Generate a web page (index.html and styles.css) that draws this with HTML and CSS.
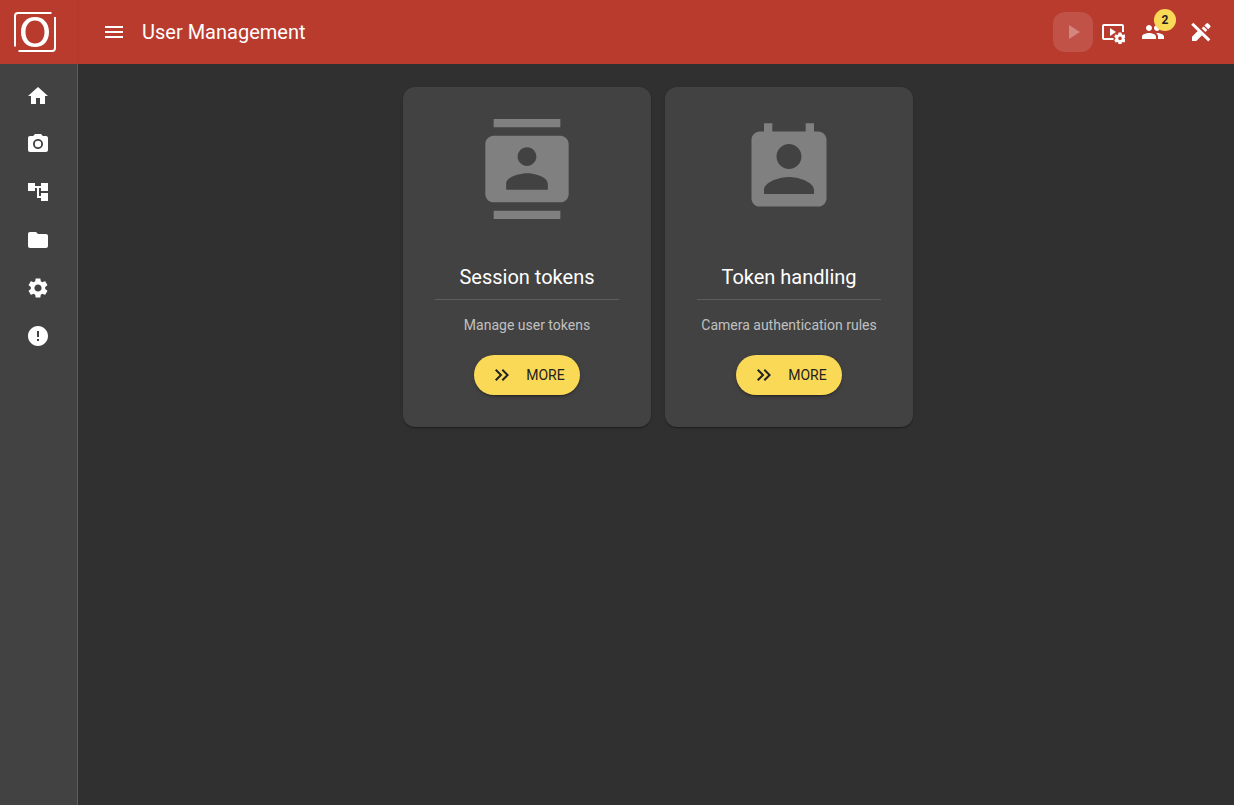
FILE: index.html
```html
<!DOCTYPE html>
<html lang="en">
<head>
<meta charset="utf-8">
<title>User Management</title>
<link rel="stylesheet" href="styles.css">
</head>
<body>
<div class="app">
  <header class="topbar">
    <a class="logo" href="#" aria-label="Home page">
      <svg width="46" height="44" viewBox="0 0 46 44" fill="none" stroke="#fff">
        <path d="M3 36.500V6Q3 3 6 3H39.500M43 7V38Q43 41 40 41H6.500" stroke-width="2"/>
        <path d="M23 7C31.500 7 37 13 37 22S31.500 37 23 37 9 31 9 22 14.500 7 23 7ZM23 10.500C17.500 10.500 13.500 15 13.500 22S17.500 33.500 23 33.500 32.500 29 32.500 22 28.500 10.500 23 10.500Z" fill="#fff" fill-rule="evenodd" stroke="none"/>
      </svg>
    </a>
    <button class="menu" type="button" aria-label="Menu">
      <svg class="icon" viewBox="0 0 24 24"><path d="M3 18h18v-2H3v2zm0-5h18v-2H3v2zm0-7v2h18V6H3z"/></svg>
    </button>
    <h1 class="title">User Management</h1>
    <div class="actions">
      <button class="action play" type="button" aria-label="Run" disabled>
        <svg class="icon" viewBox="0 0 24 24"><path d="M8 5v14l11-7z"/></svg>
      </button>
      <button class="action" type="button" aria-label="Playback settings">
        <svg class="icon" viewBox="0 0 24 24"><path d="M1 6Q1 4 3 4H21Q23 4 23 6V12H21V6H3V18H12.500V20H3Q1 20 1 18Z"/><path d="M9 8v8l6-4z"/><path fill-rule="evenodd" d="M17.500 12.600h3l.3 1.700 1 .6 1.600-.6 1.400 2.500-1.300 1.100v1.100l1.300 1.100-1.400 2.500-1.600-.6-1 .6-.3 1.700h-3l-.3-1.700-1-.6-1.600.6-1.400-2.500 1.300-1.100v-1.100l-1.300-1.100 1.400-2.500 1.600.6 1-.6zM19 16.600a1.800 1.800 0 1 0 0 3.600 1.800 1.800 0 0 0 0-3.600z"/></svg>
      </button>
      <button class="action" type="button" aria-label="Users">
        <svg class="icon" viewBox="0 0 24 24"><path d="M16 11c1.660 0 2.990-1.340 2.990-3S17.660 5 16 5s-3 1.340-3 3 1.340 3 3 3zm-8 0c1.660 0 2.990-1.340 2.990-3S9.660 5 8 5 5 6.340 5 8s1.340 3 3 3zm0 2c-2.330 0-7 1.170-7 3.500V19h14v-2.500c0-2.330-4.670-3.500-7-3.500zm8 0c-.29 0-.62.020-.97.050 1.160.84 1.970 1.970 1.970 3.450V19h6v-2.500c0-2.330-4.670-3.500-7-3.500z"/></svg>
        <span class="badge">2</span>
      </button>
      <button class="action tools" type="button" aria-label="Tools">
        <svg class="icon" viewBox="0 0 24 24"><path d="M4.300 2.700 21.300 19.300 19.200 21.400 2.200 4.800Z"/><path d="M3 16.700 9 10.700 13.300 15 7.300 21H3ZM12.700 8.300 14.600 6.400 18.300 10.100 16.400 12ZM15.400 5.600 17.400 3.500Q18.300 2.700 19.200 3.500L21.200 5.400Q22 6.300 21.200 7.200L19.200 9.300Z"/></svg>
      </button>
    </div>
  </header>
  <nav class="sidebar" aria-label="Main">
    <a class="nav" href="#" aria-label="Home"><svg class="icon" viewBox="0 0 24 24"><path d="M10 20v-6h4v6h5v-8h3L12 3 2 12h3v8z"/></svg></a>
    <a class="nav" href="#" aria-label="Camera"><svg class="icon" viewBox="0 0 24 24"><circle cx="12" cy="12" r="3.200"/><path d="M9 2L7.170 4H4c-1.100 0-2 .9-2 2v12c0 1.100.9 2 2 2h16c1.100 0 2-.9 2-2V6c0-1.100-.9-2-2-2h-3.170L15 2H9zm3 15c-2.760 0-5-2.240-5-5s2.240-5 5-5 5 2.240 5 5-2.240 5-5 5z"/></svg></a>
    <a class="nav" href="#" aria-label="Processing"><svg class="icon" viewBox="0 0 24 24"><path d="M22 11V3h-7v3H9V3H2v8h7V8h2v10h4v3h7v-8h-7v3h-2V8h2v3z"/></svg></a>
    <a class="nav" href="#" aria-label="Files"><svg class="icon" viewBox="0 0 24 24"><path d="M10 4H4c-1.100 0-1.990.9-1.990 2L2 18c0 1.100.9 2 2 2h16c1.100 0 2-.9 2-2V8c0-1.100-.9-2-2-2h-8l-2-2z"/></svg></a>
    <a class="nav" href="#" aria-label="Settings"><svg class="icon" viewBox="0 0 24 24"><path d="M19.140 12.940c.04-.3.060-.61.060-.94 0-.32-.020-.64-.070-.94l2.030-1.580c.18-.14.230-.41.120-.61l-1.920-3.320c-.12-.22-.37-.29-.59-.22l-2.390.96c-.5-.38-1.030-.7-1.620-.94l-.36-2.540c-.04-.24-.24-.41-.48-.41h-3.840c-.24 0-.43.17-.47.41l-.36 2.540c-.59.24-1.130.57-1.620.94l-2.390-.96c-.22-.08-.47 0-.59.22L2.740 8.870c-.12.21-.08.47.12.61l2.030 1.580c-.05.3-.09.63-.09.94s.02.64.07.94l-2.030 1.580c-.18.14-.23.41-.12.61l1.920 3.320c.12.22.37.29.59.22l2.390-.96c.5.38 1.030.7 1.620.94l.36 2.540c.05.24.24.41.48.41h3.840c.24 0 .44-.17.47-.41l.36-2.540c.59-.24 1.130-.56 1.620-.94l2.390.96c.22.08.47 0 .59-.22l1.920-3.320c.12-.22.07-.47-.12-.61l-2.010-1.580zM12 15.600c-1.980 0-3.600-1.620-3.600-3.600s1.620-3.600 3.600-3.600 3.600 1.620 3.600 3.600-1.620 3.600-3.600 3.600z"/></svg></a>
    <a class="nav" href="#" aria-label="Messages"><svg class="icon" viewBox="0 0 24 24"><path d="M12 2C6.480 2 2 6.480 2 12s4.480 10 10 10 10-4.480 10-10S17.520 2 12 2zm1 15h-2v-2h2v2zm0-4h-2V7h2v6z"/></svg></a>
  </nav>
  <main class="content">
    <section class="card">
      <svg class="picture" viewBox="0 0 24 24"><path d="M20 0H4v2h16V0zM4 24h16v-2H4v2zM20 4H4c-1.100 0-2 .9-2 2v12c0 1.100.9 2 2 2h16c1.100 0 2-.9 2-2V6c0-1.100-.9-2-2-2zm-8 2.750c1.240 0 2.250 1.010 2.250 2.250s-1.010 2.250-2.250 2.250S9.750 10.240 9.750 9 10.760 6.750 12 6.750zM17 17H7v-1.500c0-1.670 3.330-2.500 5-2.500s5 .83 5 2.500V17z"/></svg>
      <h2 class="heading">Session tokens</h2>
      <p class="text">Manage user tokens</p>
      <button class="more" type="button"><svg class="icon" viewBox="0 0 24 24"><path d="M6.410 6 5 7.410 9.580 12 5 16.590 6.410 18l6-6zM13 6l-1.410 1.410L16.170 12l-4.580 4.590L13 18l6-6z"/></svg>MORE</button>
    </section>
    <section class="card">
      <svg class="picture" viewBox="0 0 24 24"><path d="M19 3h-1V1h-2v2H8V1H6v2H5c-1.110 0-2 .9-2 2v14c0 1.100.89 2 2 2h14c1.100 0 2-.9 2-2V5c0-1.100-.9-2-2-2zm-7 3c1.660 0 3 1.340 3 3s-1.340 3-3 3-3-1.340-3-3 1.340-3 3-3zm6 12H6v-1c0-2 4-3.100 6-3.100s6 1.100 6 3.100v1z"/></svg>
      <h2 class="heading">Token handling</h2>
      <p class="text">Camera authentication rules</p>
      <button class="more" type="button"><svg class="icon" viewBox="0 0 24 24"><path d="M6.410 6 5 7.410 9.580 12 5 16.590 6.410 18l6-6zM13 6l-1.410 1.410L16.170 12l-4.580 4.590L13 18l6-6z"/></svg>MORE</button>
    </section>
  </main>
</div>
</body>
</html>
```
FILE: styles.css
```css
* { box-sizing: border-box; }
body {
  margin: 0;
  background: #303030;
  color: #fff;
  font-family: Roboto, "Liberation Sans", sans-serif;
  font-size: 14px;
}
button { border: 0; padding: 0; background: none; color: inherit; font: inherit; }
.app {
  display: grid;
  grid-template: 64px 1fr / 78px 1fr;
  min-height: 100vh;
}
.icon { display: block; width: 24px; height: 24px; fill: currentColor; flex: none; }

.topbar {
  grid-column: 1 / -1;
  display: flex;
  align-items: center;
  background: #b93b2e;
}
.logo {
  display: flex;
  align-items: center;
  width: 78px;
  height: 64px;
  padding-left: 12px;
  border-right: 1px solid #9c4238;
}
.menu { margin-left: 24px; }
.title { margin: 0 0 0 16px; font-size: 20px; line-height: 32px; font-weight: 400; }
.actions { display: flex; margin-left: auto; padding-right: 13px; }
.action {
  position: relative;
  display: grid;
  place-items: center;
  width: 40px;
  height: 40px;
  border-radius: 12px;
}
.play { background: rgba(255, 255, 255, .12); color: rgba(255, 255, 255, .3); }
.tools { margin-left: 8px; }
.badge {
  position: absolute;
  top: -3px;
  right: -3px;
  width: 22px;
  border-radius: 50%;
  background: #fad956;
  color: #222;
  font-size: 12px;
  line-height: 22px;
  font-weight: 700;
  text-align: center;
}

.sidebar {
  display: flex;
  flex-direction: column;
  padding-top: 8px;
  background: #424242;
  border-right: 1px solid #5e5e5e;
}
.nav { display: flex; align-items: center; height: 48px; padding-left: 26px; color: #fff; }

.content {
  display: flex;
  justify-content: center;
  align-items: flex-start;
  gap: 14px;
  padding: 23px 0 0 4px;
}
.card {
  display: flex;
  flex-direction: column;
  align-items: center;
  width: 248px;
  padding: 32px;
  border-radius: 12px;
  background: #424242;
  box-shadow: 0 2px 1px -1px rgba(0, 0, 0, .2), 0 1px 1px rgba(0, 0, 0, .14), 0 1px 3px rgba(0, 0, 0, .12);
}
.picture { width: 100px; height: 100px; fill: #808080; }
.heading {
  align-self: stretch;
  margin: 42px 0 0;
  padding-bottom: 6px;
  border-bottom: 1px solid #5e5e5e;
  font-size: 20px;
  line-height: 32px;
  font-weight: 400;
  text-align: center;
}
.text { margin: 15px 0 20px; color: #c0c0c0; line-height: 20px; white-space: nowrap; }
.more {
  display: flex;
  align-items: center;
  gap: 12px;
  height: 40px;
  padding: 0 15px 0 16px;
  border-radius: 20px;
  background: #fad956;
  color: #222;
  box-shadow: 0 3px 1px -2px rgba(0, 0, 0, .2), 0 2px 2px rgba(0, 0, 0, .14), 0 1px 5px rgba(0, 0, 0, .12);
}
```
